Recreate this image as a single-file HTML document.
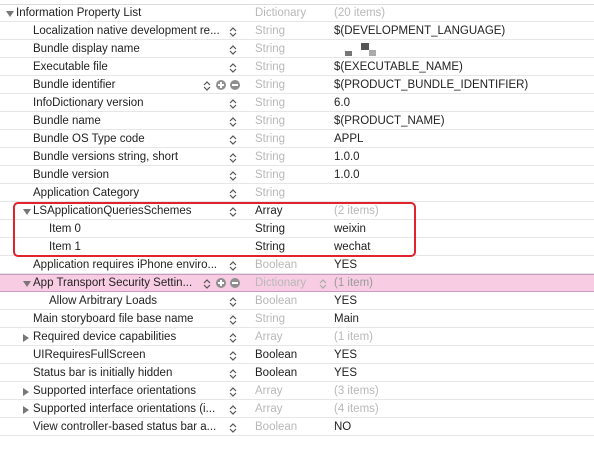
<!DOCTYPE html><html><head><style>
body{margin:0;width:594px;height:453px;background:#fff;font-family:"Liberation Sans",sans-serif;font-size:11.5px;color:#222;position:relative;overflow:hidden}
.r{position:absolute;left:0;width:594px;height:18px;border-bottom:1px solid #e6e6e6;box-sizing:border-box;line-height:19px}
.r span{position:absolute;white-space:nowrap}
.k{left:33px}.t{left:255px}.v{left:334px}
.g{color:#b8b8b8}
.st{position:absolute;left:229px;top:4px;width:8px;height:12px}
.pm{position:absolute;top:4px;width:10px;height:10px;border-radius:50%;background:#8f8f8f}
.tri{position:absolute;width:0;height:0;border-left:4px solid transparent;border-right:4px solid transparent;border-top:6px solid #777;top:7px}
.tri.s{border-top:0;border-bottom:0;border-left:6px solid #777;border-top:4px solid transparent;border-bottom:4px solid transparent;top:6px}
.pink{background:#f8cde3;border-top:1px solid #c99bbf;border-bottom:1px solid #c99bbf}
</style></head><body>
<div style="position:absolute;left:0;top:0;width:594px;height:4px;border-bottom:1px solid #dcdcdc"></div>
<div class="r" style="top:4px"><i class="tri" style="left:6px"></i><span style="left:16px">Information Property List</span><span class="t g">Dictionary</span><span class="v g">(20 items)</span></div>
<div class="r" style="top:22px"><span class="k">Localization native development re...</span><svg class="st" viewBox="0 0 8 12"><path d="M1 5 4 2 7 5M1 7 4 10 7 7" fill="none" stroke="#555" stroke-width="1.2"/></svg><span class="t g">String</span><span class="v">$(DEVELOPMENT_LANGUAGE)</span></div>
<div class="r" style="top:40px"><span class="k">Bundle display name</span><svg class="st" viewBox="0 0 8 12"><path d="M1 5 4 2 7 5M1 7 4 10 7 7" fill="none" stroke="#555" stroke-width="1.2"/></svg><span class="t g">String</span><div style="position:absolute;left:345px;top:11px;width:7px;height:5px;background:#777"></div><div style="position:absolute;left:361px;top:3px;width:8px;height:7px;background:#555"></div><div style="position:absolute;left:369px;top:10px;width:7px;height:6px;background:#aaa"></div></div>
<div class="r" style="top:58px"><span class="k">Executable file</span><svg class="st" viewBox="0 0 8 12"><path d="M1 5 4 2 7 5M1 7 4 10 7 7" fill="none" stroke="#555" stroke-width="1.2"/></svg><span class="t g">String</span><span class="v">$(EXECUTABLE_NAME)</span></div>
<div class="r" style="top:76px"><span class="k">Bundle identifier</span><svg class="st" style="left:203px" viewBox="0 0 8 12"><path d="M1 5 4 2 7 5M1 7 4 10 7 7" fill="none" stroke="#555" stroke-width="1.2"/></svg><i class="pm" style="left:216px"></i><b style="position:absolute;left:218px;top:8px;width:6px;height:2px;background:#fff"></b><b style="position:absolute;left:220px;top:6px;width:2px;height:6px;background:#fff"></b><i class="pm" style="left:230px"></i><b style="position:absolute;left:232px;top:8px;width:6px;height:2px;background:#fff"></b><span class="t g">String</span><span class="v">$(PRODUCT_BUNDLE_IDENTIFIER)</span></div>
<div class="r" style="top:94px"><span class="k">InfoDictionary version</span><svg class="st" viewBox="0 0 8 12"><path d="M1 5 4 2 7 5M1 7 4 10 7 7" fill="none" stroke="#555" stroke-width="1.2"/></svg><span class="t g">String</span><span class="v">6.0</span></div>
<div class="r" style="top:112px"><span class="k">Bundle name</span><svg class="st" viewBox="0 0 8 12"><path d="M1 5 4 2 7 5M1 7 4 10 7 7" fill="none" stroke="#555" stroke-width="1.2"/></svg><span class="t g">String</span><span class="v">$(PRODUCT_NAME)</span></div>
<div class="r" style="top:130px"><span class="k">Bundle OS Type code</span><svg class="st" viewBox="0 0 8 12"><path d="M1 5 4 2 7 5M1 7 4 10 7 7" fill="none" stroke="#555" stroke-width="1.2"/></svg><span class="t g">String</span><span class="v">APPL</span></div>
<div class="r" style="top:148px"><span class="k">Bundle versions string, short</span><svg class="st" viewBox="0 0 8 12"><path d="M1 5 4 2 7 5M1 7 4 10 7 7" fill="none" stroke="#555" stroke-width="1.2"/></svg><span class="t g">String</span><span class="v">1.0.0</span></div>
<div class="r" style="top:166px"><span class="k">Bundle version</span><svg class="st" viewBox="0 0 8 12"><path d="M1 5 4 2 7 5M1 7 4 10 7 7" fill="none" stroke="#555" stroke-width="1.2"/></svg><span class="t g">String</span><span class="v">1.0.0</span></div>
<div class="r" style="top:184px"><span class="k">Application Category</span><svg class="st" viewBox="0 0 8 12"><path d="M1 5 4 2 7 5M1 7 4 10 7 7" fill="none" stroke="#555" stroke-width="1.2"/></svg><span class="t g">String</span></div>
<div class="r" style="top:202px"><i class="tri" style="left:23px"></i><span style="left:33px">LSApplicationQueriesSchemes</span><svg class="st" viewBox="0 0 8 12"><path d="M1 5 4 2 7 5M1 7 4 10 7 7" fill="none" stroke="#555" stroke-width="1.2"/></svg><span class="t">Array</span><span class="v g">(2 items)</span></div>
<div class="r" style="top:220px"><span style="left:49px">Item 0</span><span class="t">String</span><span class="v">weixin</span></div>
<div class="r" style="top:238px"><span style="left:49px">Item 1</span><span class="t">String</span><span class="v">wechat</span></div>
<div class="r" style="top:256px"><span class="k">Application requires iPhone enviro...</span><svg class="st" viewBox="0 0 8 12"><path d="M1 5 4 2 7 5M1 7 4 10 7 7" fill="none" stroke="#555" stroke-width="1.2"/></svg><span class="t g">Boolean</span><span class="v">YES</span></div>
<div class="r pink" style="top:274px;line-height:17px"><i class="tri" style="left:23px;top:6px"></i><span style="left:33px">App Transport Security Settin...</span><svg class="st" style="left:203px;top:3px" viewBox="0 0 8 12"><path d="M1 5 4 2 7 5M1 7 4 10 7 7" fill="none" stroke="#555" stroke-width="1.2"/></svg><i class="pm" style="left:216px;top:3px"></i><b style="position:absolute;left:218px;top:7px;width:6px;height:2px;background:#fff"></b><b style="position:absolute;left:220px;top:5px;width:2px;height:6px;background:#fff"></b><i class="pm" style="left:230px;top:3px"></i><b style="position:absolute;left:232px;top:7px;width:6px;height:2px;background:#fff"></b><span class="t g">Dictionary</span><svg class="st" style="left:319px;top:3px" viewBox="0 0 8 12"><path d="M1 5 4 2 7 5M1 7 4 10 7 7" fill="none" stroke="#aaa" stroke-width="1.2"/></svg><span class="v" style="color:#999">(1 item)</span></div>
<div class="r" style="top:292px"><span style="left:49px">Allow Arbitrary Loads</span><svg class="st" viewBox="0 0 8 12"><path d="M1 5 4 2 7 5M1 7 4 10 7 7" fill="none" stroke="#555" stroke-width="1.2"/></svg><span class="t g">Boolean</span><span class="v">YES</span></div>
<div class="r" style="top:310px"><span class="k">Main storyboard file base name</span><svg class="st" viewBox="0 0 8 12"><path d="M1 5 4 2 7 5M1 7 4 10 7 7" fill="none" stroke="#555" stroke-width="1.2"/></svg><span class="t g">String</span><span class="v">Main</span></div>
<div class="r" style="top:328px"><i class="tri s" style="left:23px"></i><span class="k">Required device capabilities</span><svg class="st" viewBox="0 0 8 12"><path d="M1 5 4 2 7 5M1 7 4 10 7 7" fill="none" stroke="#555" stroke-width="1.2"/></svg><span class="t g">Array</span><span class="v g">(1 item)</span></div>
<div class="r" style="top:346px"><span class="k">UIRequiresFullScreen</span><svg class="st" viewBox="0 0 8 12"><path d="M1 5 4 2 7 5M1 7 4 10 7 7" fill="none" stroke="#555" stroke-width="1.2"/></svg><span class="t">Boolean</span><span class="v">YES</span></div>
<div class="r" style="top:364px"><span class="k">Status bar is initially hidden</span><svg class="st" viewBox="0 0 8 12"><path d="M1 5 4 2 7 5M1 7 4 10 7 7" fill="none" stroke="#555" stroke-width="1.2"/></svg><span class="t">Boolean</span><span class="v">YES</span></div>
<div class="r" style="top:382px"><i class="tri s" style="left:23px"></i><span class="k">Supported interface orientations</span><svg class="st" viewBox="0 0 8 12"><path d="M1 5 4 2 7 5M1 7 4 10 7 7" fill="none" stroke="#555" stroke-width="1.2"/></svg><span class="t g">Array</span><span class="v g">(3 items)</span></div>
<div class="r" style="top:400px"><i class="tri s" style="left:23px"></i><span class="k">Supported interface orientations (i...</span><svg class="st" viewBox="0 0 8 12"><path d="M1 5 4 2 7 5M1 7 4 10 7 7" fill="none" stroke="#555" stroke-width="1.2"/></svg><span class="t g">Array</span><span class="v g">(4 items)</span></div>
<div class="r" style="top:418px"><span class="k">View controller-based status bar a...</span><svg class="st" viewBox="0 0 8 12"><path d="M1 5 4 2 7 5M1 7 4 10 7 7" fill="none" stroke="#555" stroke-width="1.2"/></svg><span class="t g">Boolean</span><span class="v">NO</span></div>
<div style="position:absolute;left:13px;top:202px;width:403px;height:55px;border:2.5px solid #e0232c;border-radius:5px;box-sizing:border-box"></div>
</body></html>
